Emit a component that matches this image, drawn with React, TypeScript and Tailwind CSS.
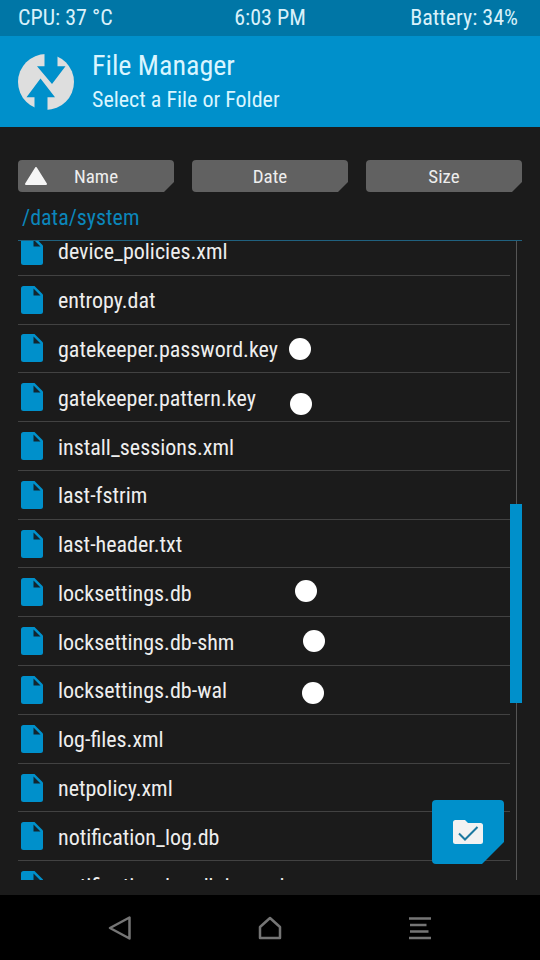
import React from 'react';

type FileEntry = {
  name: string;
  dot?: string;
};

const files: FileEntry[] = [
  { name: 'device_policies.xml' },
  { name: 'entropy.dat' },
  { name: 'gatekeeper.password.key', dot: 'left-[271px] top-[13px]' },
  { name: 'gatekeeper.pattern.key', dot: 'left-[272px] top-[20px]' },
  { name: 'install_sessions.xml' },
  { name: 'last-fstrim' },
  { name: 'last-header.txt' },
  { name: 'locksettings.db', dot: 'left-[277px] top-[12px]' },
  { name: 'locksettings.db-shm', dot: 'left-[285px] top-[13px]' },
  { name: 'locksettings.db-wal', dot: 'left-[284px] top-[16px]' },
  { name: 'log-files.xml' },
  { name: 'netpolicy.xml' },
  { name: 'notification_log.db' },
  { name: 'notification_log.db-journal' },
];

const Logo: React.FC = () => (
  <svg viewBox="0 0 56 56" className="size-14 shrink-0" aria-hidden="true">
    <circle cx="28" cy="28" r="28" fill="#dedede" />
    {/* Down arrow, then up arrow */}
    <path fill="#0090cb" d="M26.500 -1H39.500V12.300H47.500L34 30L19 12.300H26.500Z" />
    <path fill="#0090cb" d="M22.500 24.500L37 43.300H29.500V57H16.500V43.300H8.500Z" />
  </svg>
);

const FileIcon: React.FC = () => (
  <svg viewBox="0 0 22 28" className="h-7 w-[22px] shrink-0" aria-hidden="true">
    <path fill="#0090cb" d="M2.500 0H13.500L22 8.500V25.500Q22 28 19.500 28H2.500Q0 28 0 25.500V2.500Q0 0 2.500 0Z" />
    <path fill="#12252f" d="M12.500 2.500L19.500 9.500H12.500Z" />
  </svg>
);

const SortButton: React.FC<{ label: string; active?: boolean }> = ({ label, active }) => (
  <button
    type="button"
    className="relative h-8 flex-1 rounded bg-[#616161] pt-[2px] text-[19px] text-[#eeeeee] [clip-path:polygon(0_0,100%_0,100%_calc(100%-10px),calc(100%-10px)_100%,0_100%)]"
  >
    {active && (
      <svg viewBox="0 0 22 18" className="absolute left-[7px] top-[7px] h-[18px] w-[22px]" aria-hidden="true">
        <path fill="#f5f5f5" stroke="#f5f5f5" strokeWidth="2" strokeLinejoin="round" d="M11 1L21 17H1Z" />
      </svg>
    )}
    {label}
  </button>
);

const App: React.FC = () => {
  return (
    <div className="flex h-screen flex-col bg-[#1b1b1b] font-['Roboto_Condensed','Liberation_Sans_Narrow',Roboto,sans-serif] text-[22px] text-[#eeeeee]">
      {/* Status bar */}
      <div className="grid h-9 shrink-0 grid-cols-3 items-center bg-[#0076a6] px-[18px] pb-[2px] text-[#d9f1fa]">
        <span>CPU: 37 °C</span>
        <span className="text-center">6:03 PM</span>
        <span className="pr-1 text-right">Battery: 34%</span>
      </div>

      <header className="flex h-[91px] shrink-0 items-center gap-[18px] bg-[#0090cb] px-[18px] text-[#d9f5ff]">
        <Logo />
        <div>
          <h1 className="text-[28px] leading-9">File Manager</h1>
          <p className="leading-8">Select a File or Folder</p>
        </div>
      </header>

      <main className="relative flex min-h-0 flex-1 flex-col px-[18px] pb-[15px] pt-[33px]">
        <div className="flex gap-[18px]">
          <SortButton label="Name" active />
          <SortButton label="Date" />
          <SortButton label="Size" />
        </div>

        <p className="mt-2 h-10 px-1 leading-9 text-[#0b86ba]">/data/system</p>

        <div className="flex min-h-0 flex-1 border-t border-[#20617f]">
          <div className="min-w-0 flex-1 overflow-hidden">
            <ul className="-mt-[14px] grid h-[683px] auto-rows-fr">
              {files.map((file) => (
                <li key={file.name} className="relative flex items-center gap-[15px] border-b border-[#424242] pl-[3px]">
                  <FileIcon />
                  <span className="pt-[2px]">{file.name}</span>
                  {file.dot && <span className={`absolute size-[22px] rounded-full bg-white ${file.dot}`} />}
                </li>
              ))}
            </ul>
          </div>

          {/* Scroll bar */}
          <div className="relative flex w-3 justify-center">
            <div className="w-px bg-[#555555]" />
            <div className="absolute bottom-[177px] h-[199px] w-full bg-[#0090cb]" />
          </div>
        </div>

        <button
          type="button"
          aria-label="Select this folder"
          className="absolute bottom-[31px] right-9 flex h-16 w-[72px] items-center justify-center rounded bg-[#0090cb] [clip-path:polygon(0_0,100%_0,100%_calc(100%-22px),calc(100%-22px)_100%,0_100%)]"
        >
          <svg viewBox="0 0 30 26" className="h-[26px] w-[30px]" aria-hidden="true">
            <path fill="#f2f2f2" d="M2.500 1H12L15 4H27.500Q30 4 30 6.500V22.500Q30 25 27.500 25H2.500Q0 25 0 22.500V3.500Q0 1 2.500 1Z" />
            <path fill="none" stroke="#1c789f" strokeWidth="2" d="M6 14.500L12 20.500L24.500 8" />
          </svg>
        </button>
      </main>

      <nav className="flex h-[65px] shrink-0 items-center justify-center gap-[126px] bg-black text-[#757575]">
        <button type="button" aria-label="Back">
          <svg viewBox="0 0 24 24" className="size-6" fill="none" stroke="currentColor" strokeWidth="2.500" strokeLinejoin="round" aria-hidden="true">
            <path d="M21.500 1.500V22.500L2 12Z" />
          </svg>
        </button>
        <button type="button" aria-label="Home">
          <svg viewBox="0 0 24 24" className="size-6" fill="none" stroke="currentColor" strokeWidth="2.500" strokeLinejoin="round" aria-hidden="true">
            <path d="M2 22V11L12 2L22 11V22Z" />
          </svg>
        </button>
        <button type="button" aria-label="Menu">
          <svg viewBox="0 0 24 24" className="size-6" fill="none" stroke="currentColor" strokeWidth="2.500" aria-hidden="true">
            <path d="M1 2.500H23M2 9H18.500M2 15.500H20.500M1 22H23" />
          </svg>
        </button>
      </nav>
    </div>
  );
};

export default App;
